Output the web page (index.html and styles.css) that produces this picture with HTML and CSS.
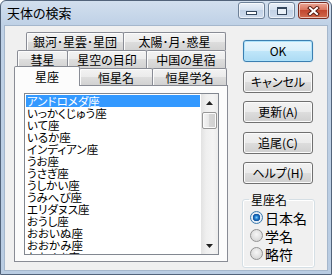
FILE: index.html
```html
<!DOCTYPE html>
<html lang="ja">
<head>
    <meta charset="UTF-8">
    <title>天体の検索</title>
    <link rel="stylesheet" href="styles.css">
</head>
<body>
    <div class="window">
        <div class="titlebar">
            <span class="title">天体の検索</span>
            <div class="caption">
                <div class="cbtn"><div class="min-glyph"></div></div>
                <div class="cbtn"><div class="max-glyph"></div></div>
                <div class="cbtn close">
                    <svg width="13" height="10" viewBox="0 0 13 10">
                        <path d="M3 2 L10 8 M10 2 L3 8" stroke="#5b1c12" stroke-width="4" stroke-linecap="square"/>
                        <path d="M3 2 L10 8 M10 2 L3 8" stroke="#fff" stroke-width="2" stroke-linecap="square"/>
                    </svg>
                </div>
            </div>
        </div>

        <div class="client">
            <div class="tabs">
                <div class="tab-row row1">
                    <div class="tab t98">銀河･星雲･星団</div>
                    <div class="tab t103">太陽･月･惑星</div>
                </div>
                <div class="tab-row row2">
                    <div class="tab t51">彗星</div>
                    <div class="tab t80">星空の目印</div>
                    <div class="tab t80">中国の星宿</div>
                </div>
                <div class="tab-row row3">
                    <div class="tab active t66">星座</div>
                    <div class="tab t74">恒星名</div>
                    <div class="tab t75">恒星学名</div>
                </div>
                <div class="panel">
                    <div class="listbox">
                        <div class="items">
                            <div class="item selected">アンドロメダ座</div>
                            <div class="item">いっかくじゅう座</div>
                            <div class="item">いて座</div>
                            <div class="item">いるか座</div>
                            <div class="item">インディアン座</div>
                            <div class="item">うお座</div>
                            <div class="item">うさぎ座</div>
                            <div class="item">うしかい座</div>
                            <div class="item">うみへび座</div>
                            <div class="item">エリダヌス座</div>
                            <div class="item">おうし座</div>
                            <div class="item">おおいぬ座</div>
                            <div class="item">おおかみ座</div>
                            <div class="item">おおぐま座</div>
                        </div>
                        <div class="scrollbar">
                            <div class="arrow">
                                <svg width="7" height="4" viewBox="0 0 7 4"><polygon points="3.5,0 7,4 0,4" fill="#222"/></svg>
                            </div>
                            <div class="thumb"></div>
                            <div class="track"></div>
                            <div class="arrow">
                                <svg width="7" height="4" viewBox="0 0 7 4"><polygon points="0,0 7,0 3.5,4" fill="#222"/></svg>
                            </div>
                        </div>
                    </div>
                </div>
            </div>

            <div class="side">
                <div class="btn default">OK</div>
                <div class="btn">キャンセル</div>
                <div class="btn">更新(A)</div>
                <div class="btn">追尾(C)</div>
                <div class="btn">ヘルプ(H)</div>
                <fieldset class="group">
                    <legend>星座名</legend>
                    <div class="radio"><span class="dot checked"></span>日本名</div>
                    <div class="radio"><span class="dot"></span>学名</div>
                    <div class="radio"><span class="dot"></span>略符</div>
                </fieldset>
            </div>
        </div>
    </div>
</body>
</html>
```

FILE: styles.css
```css
body {
    margin: 0;
    background: #fff;
    font-family: "Noto Sans CJK JP", sans-serif;
    font-size: 12px;
    font-feature-settings: "palt";
    color: #000;
}

.window {
    width: 332px;
    height: 275px;
    box-sizing: border-box;
    border: 1px solid #52637a;
    border-radius: 6px 6px 0 0;
    background: linear-gradient(#d2dfee, #bfd1e6 24px, #b9cce2);
    display: flex;
    flex-direction: column;
    overflow: hidden;
}

/* title bar */
.titlebar {
    height: 24px;
    flex: none;
    display: flex;
    align-items: flex-start;
    padding: 0 2px 0 6px;
}

.title {
    font-size: 13px;
    line-height: 23px;
}

.caption {
    margin-left: auto;
    margin-top: 1px;
    display: flex;
    gap: 3px;
}

.cbtn {
    width: 27px;
    height: 17px;
    box-sizing: border-box;
    border: 1px solid #6e8198;
    border-radius: 3px;
    background: linear-gradient(#eaf0f8, #d3dfee 50%, #c2d2e6 50%, #cfdcee);
    box-shadow: inset 0 0 0 1px rgba(255,255,255,0.6);
    display: flex;
    align-items: center;
    justify-content: center;
}

.cbtn.close {
    width: 31px;
    border-color: #7b2b1f;
    background: linear-gradient(#eba796, #d77059 50%, #c2472f 50%, #d0694c);
}

.min-glyph {
    width: 9px;
    height: 2px;
    margin-top: 5px;
    background: #fff;
    border: 1px solid #34465c;
}

.max-glyph {
    width: 8px;
    height: 5px;
    border: 1px solid #34465c;
    border-top-width: 2px;
    background: #e9f0f8;
}

/* client area */
.client {
    flex: 1;
    margin: 0 3px 3px;
    border: 1px solid #a5b7cc;
    background: #f0f0f0;
    display: flex;
    padding: 6px 0 0 9px;
}

.tabs {
    width: 214px;
    display: flex;
    flex-direction: column;
}

.tab-row {
    display: flex;
    height: 18px;
    align-items: flex-start;
}

.row1 { padding-left: 12px; }
.row2 { padding-left: 3px; }
.row3 { padding-left: 2px; height: 17px; }

.tab {
    height: 100%;
    box-sizing: border-box;
    border: 1px solid #898c95;
    border-bottom: none;
    border-radius: 2px 2px 0 0;
    background: linear-gradient(#f3f3f3, #ebebeb 50%, #dedede 50%, #d2d2d2);
    box-shadow: inset 1px 1px 0 #fcfcfc;
    text-align: center;
    line-height: 17px;
    white-space: nowrap;
}

.tab + .tab { margin-left: -1px; }

.t51 { width: 51px; }
.t66 { width: 66px; }
.t74 { width: 74px; }
.t75 { width: 75px; }
.t80 { width: 80px; }
.t98 { width: 98px; }
.t103 { width: 103px; }

.tab.active {
    position: relative;
    z-index: 1;
    height: 20px;
    margin-top: -2px;
    margin-left: -2px;
    background: #fcfcfc;
    box-shadow: none;
    line-height: 19px;
}

.panel {
    height: 177px;
    box-sizing: border-box;
    border: 1px solid #898c95;
    background: #fcfcfc;
    padding: 7px 0 0 9px;
}

.listbox {
    width: 195px;
    height: 162px;
    box-sizing: border-box;
    border: 1px solid #828790;
    background: #fff;
    display: flex;
}

.items {
    flex: 1;
    padding: 1px;
    overflow: hidden;
}

.item {
    height: 12px;
    font-size: 11.5px;
    line-height: 12px;
    padding-left: 1px;
    white-space: nowrap;
}

.item.selected {
    background: #3399ff;
    color: #fff;
}

.scrollbar {
    width: 17px;
    display: flex;
    flex-direction: column;
    background: linear-gradient(to right, #e2e2e2, #efefef 30%, #f4f4f4 70%, #ececec);
}

.arrow {
    height: 17px;
    display: flex;
    align-items: center;
    justify-content: center;
}

.thumb {
    height: 17px;
    margin: 1px 1px 0;
    box-sizing: border-box;
    border: 1px solid #979797;
    border-radius: 2px;
    background: linear-gradient(to right, #f5f5f5, #e6e6e6 50%, #d6d6d6 50%, #d0d0d0);
    box-shadow: inset 0 0 0 1px #fbfbfb;
}

.track { flex: 1; }

/* right column */
.side {
    width: 73px;
    margin-left: 14px;
    padding-top: 8px;
    display: flex;
    flex-direction: column;
    gap: 8.5px;
}

.btn {
    width: 70px;
    height: 22px;
    margin-left: 1px;
    box-sizing: border-box;
    border: 1px solid #707070;
    border-radius: 3px;
    background: linear-gradient(#f2f2f2, #ebebeb 50%, #dddddd 50%, #cfcfcf);
    box-shadow: inset 0 0 0 1px #fbfbfb;
    text-align: center;
    line-height: 20px;
}

.btn.default {
    border-color: #3c7fb1;
    background: linear-gradient(#e8f5fc, #d8effb 50%, #c0e6f9 50%, #acdbf4);
    box-shadow: inset 0 0 0 1px #aee2fa, 0 0 1px #7bc3ea;
}

.group {
    width: 73px;
    margin: 0;
    box-sizing: border-box;
    border: 1px solid #d5dfe5;
    border-radius: 3px;
    box-shadow: inset 0 0 0 1px #fff;
    padding: 2px 0 4px 6px;
    min-inline-size: 0;
}

.group legend {
    padding: 0 2px;
    line-height: 14px;
}

.radio {
    height: 18px;
    display: flex;
    align-items: center;
    gap: 2px;
    font-size: 14px;
    line-height: 18px;
}

.dot {
    width: 13px;
    height: 13px;
    margin-left: 1px;
    box-sizing: border-box;
    border: 1px solid #929292;
    border-radius: 50%;
    background: radial-gradient(circle at 50% 40%, #f6f6f6, #dadada 70%, #e8e8e8);
}

.dot.checked {
    border-color: #3d7bad;
    background: radial-gradient(circle, #7fd0ff 0, #1c76c8 2px, #12519a 3.5px, #e6eef6 4px, #d4e0ec 100%);
}
```
